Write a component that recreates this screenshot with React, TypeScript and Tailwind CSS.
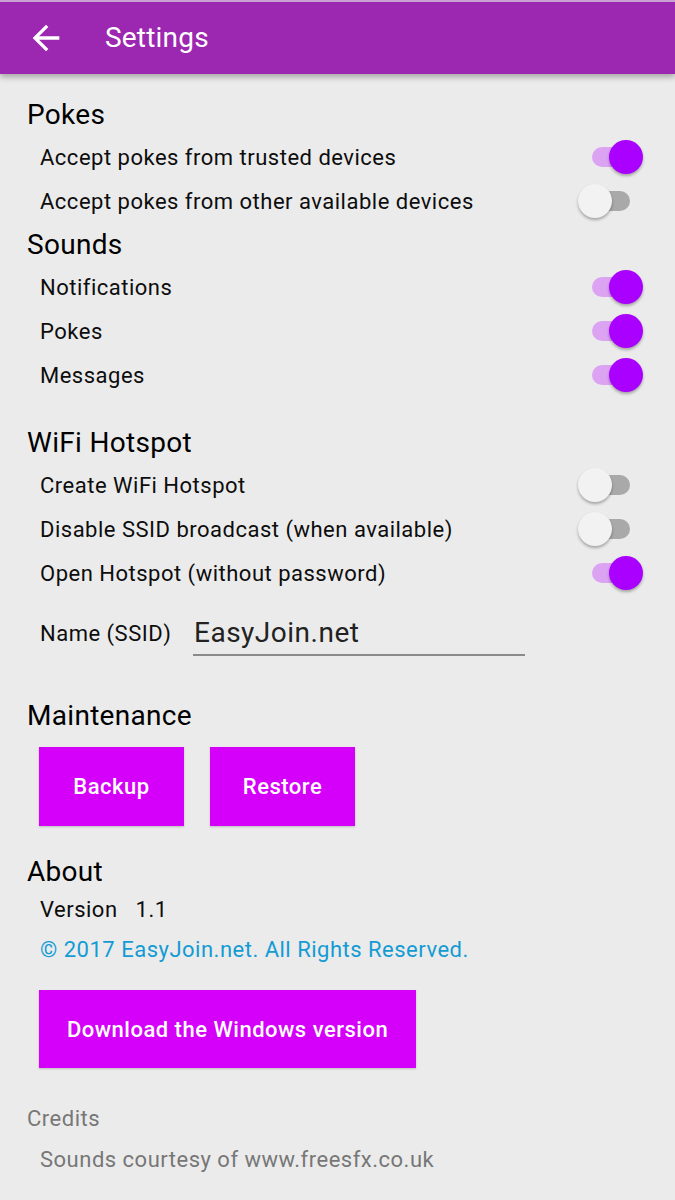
import React from "react"

function Toggle({ on }: { on: boolean }) {
  return (
    <div className="relative w-[51px] h-[34px] shrink-0">
      <div
        className={
          "absolute left-0 top-[7px] w-[38px] h-[20px] rounded-full " +
          (on ? "bg-[#dca3f3]" : "bg-[#a9a9a9]")
        }
      />
      <div
        className={
          "absolute top-0 w-[34px] h-[34px] rounded-full shadow-[0_2px_3px_rgba(0,0,0,0.3)] " +
          (on ? "left-[17px] bg-[#aa00ff]" : "left-[-14px] bg-[#f2f2f2]")
        }
      />
    </div>
  )
}

function Heading({ children, className = "" }: { children: React.ReactNode; className?: string }) {
  return (
    <div className={"h-[40px] flex items-center pl-[27px] text-[28px] tracking-[0.3px] text-black " + className}>
      {children}
    </div>
  )
}

function Row({ label, on }: { label: string; on: boolean }) {
  return (
    <div className="h-[44px] flex items-center justify-between pl-[40px] pr-[32px]">
      <span className="text-[22px] tracking-[0.5px] text-[#0d0d0d]">{label}</span>
      <Toggle on={on} />
    </div>
  )
}

export default function App() {
  return (
    <div className="w-[675px] min-h-[1200px] bg-[#ebebeb] font-['Roboto',sans-serif] overflow-hidden">
      {/* App bar */}
      <div className="h-[74px] bg-[#9c27b0] border-t-2 border-[#c9a0d4] flex items-center shadow-[0_3px_6px_rgba(0,0,0,0.3)]">
        <svg viewBox="0 0 24 24" className="w-[40px] h-[40px] ml-[26px] fill-white">
          <path d="M20 11H7.83l5.59-5.59L12 4l-8 8 8 8 1.41-1.41L7.83 13H20v-2z" />
        </svg>
        <span className="ml-[39px] text-[28px] tracking-[0.2px] text-white">Settings</span>
      </div>

      <div className="pt-[21px]">
        <Heading>Pokes</Heading>
        <Row label="Accept pokes from trusted devices" on />
        <Row label="Accept pokes from other available devices" on={false} />

        <Heading className="mt-[2px]">Sounds</Heading>
        <Row label="Notifications" on />
        <Row label="Pokes" on />
        <Row label="Messages" on />

        <Heading className="mt-[26px]">WiFi Hotspot</Heading>
        <Row label="Create WiFi Hotspot" on={false} />
        <Row label="Disable SSID broadcast (when available)" on={false} />
        <Row label="Open Hotspot (without password)" on />

        {/* SSID input */}
        <div className="mt-[16px] h-[45px] flex items-center pl-[40px]">
          <span className="text-[22px] tracking-[0.5px] text-[#0d0d0d] w-[153px]">Name (SSID)</span>
          <div className="w-[332px] h-[45px] border-b-2 border-[#8a8a8a] flex items-center pl-[1px]">
            <span className="text-[28px] tracking-[0.5px] text-[#222]">EasyJoin.net</span>
          </div>
        </div>

        <Heading className="mt-[40px]">Maintenance</Heading>
        <div className="mt-[11px] flex gap-[26px] pl-[39px]">
          <button className="w-[145px] h-[79px] bg-[#d500f9] text-white text-[22px] tracking-[0.5px] font-medium shadow-[0_1px_2px_rgba(0,0,0,0.2)]">
            Backup
          </button>
          <button className="w-[145px] h-[79px] bg-[#d500f9] text-white text-[22px] tracking-[0.5px] font-medium shadow-[0_1px_2px_rgba(0,0,0,0.2)]">
            Restore
          </button>
        </div>

        <Heading className="mt-[26px] h-[38px]">About</Heading>
        <div className="h-[35px] flex items-center pl-[40px] text-[22px] tracking-[0.5px] text-[#0d0d0d]">
          <span>Version</span>
          <span className="ml-[18px]">1.1</span>
        </div>
        <div className="h-[44px] flex items-center pl-[40px] text-[22px] tracking-[0.5px] text-[#139bd4]">
          © 2017 EasyJoin.net. All Rights Reserved.
        </div>
        <div className="mt-[19px] pl-[39px]">
          <button className="w-[377px] h-[78px] bg-[#d500f9] text-white text-[22px] tracking-[0.5px] font-medium shadow-[0_1px_2px_rgba(0,0,0,0.2)]">
            Download the Windows version
          </button>
        </div>

        <div className="mt-[30px] h-[40px] flex items-center pl-[27px] text-[22px] tracking-[0.5px] text-[#777]">Credits</div>
        <div className="h-[42px] flex items-center pl-[40px] text-[22px] tracking-[0.5px] text-[#777]">
          Sounds courtesy of www.freesfx.co.uk
        </div>
      </div>
    </div>
  )
}
